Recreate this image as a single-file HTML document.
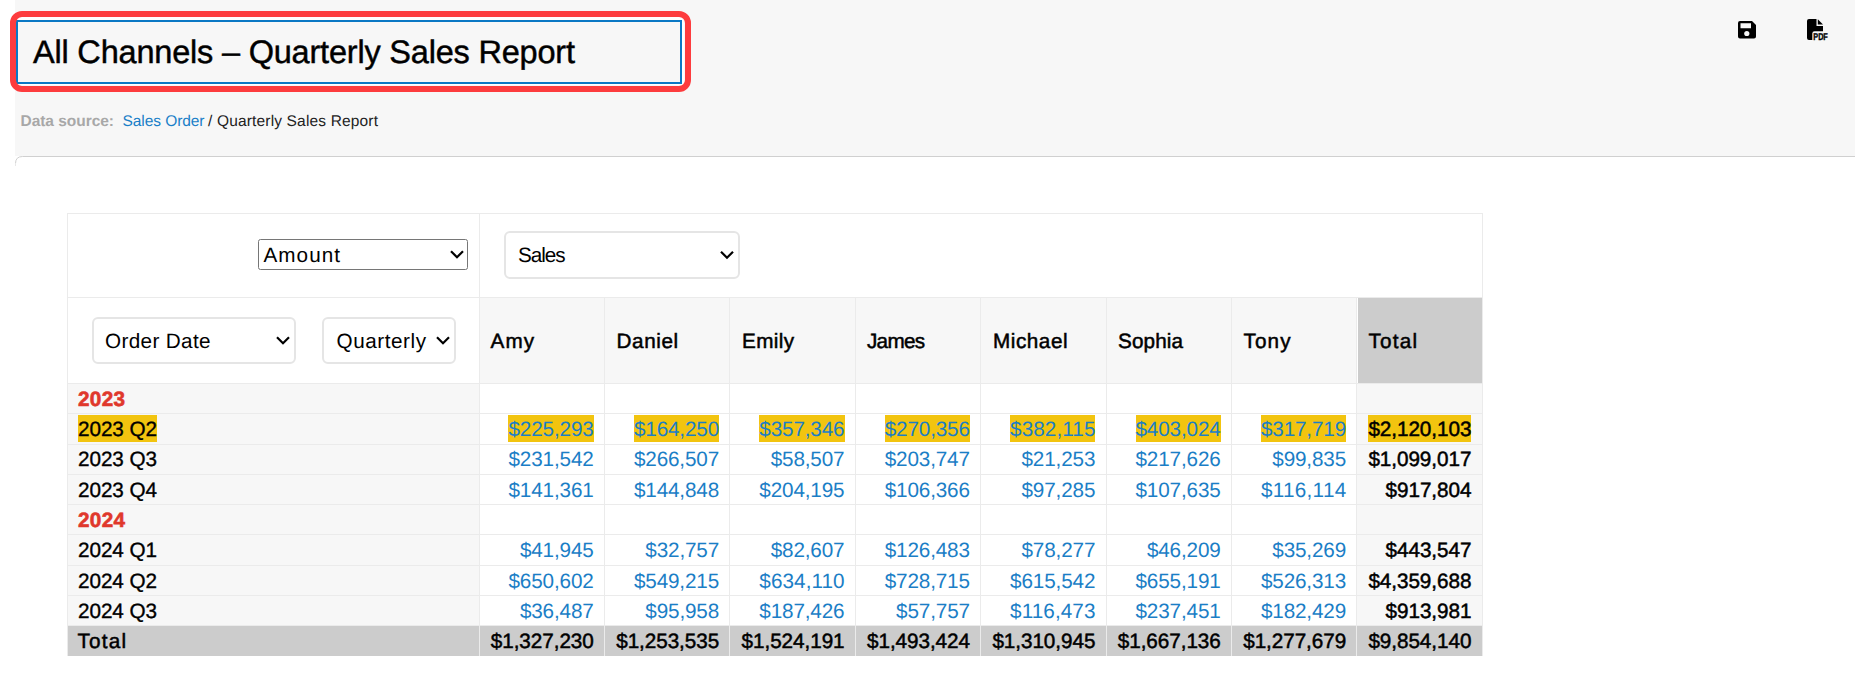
<!DOCTYPE html>
<html><head><meta charset="utf-8"><title>All Channels – Quarterly Sales Report</title>
<style>
html,body{margin:0;padding:0;width:1855px;height:674px;overflow:hidden;background:#fff;font-family:"Liberation Sans", sans-serif}
svg{display:block}
text{shape-rendering:auto}
path,circle,.g{shape-rendering:geometricPrecision}
</style></head><body>
<svg width="1855" height="674" viewBox="0 0 1855 674" font-family='"Liberation Sans", sans-serif' shape-rendering="crispEdges" text-rendering="geometricPrecision"><rect x="0" y="0" width="1855" height="674" fill="#ffffff" />
<rect x="15" y="0" width="1840" height="156" fill="#f7f7f7" />
<path d="M15 674 L15 163 Q15 156 22 156 L1855 156 L1855 674 Z" fill="#ffffff" class="g"/>
<path d="M15.5 163.5 Q15.5 156.5 22.5 156.5 L1855 156.5" fill="none" stroke="#d0d0d0" stroke-width="1" class="g"/>
<path d="M15.5 166 L15.5 163.5" fill="none" stroke="#e8e8e8" stroke-width="1" class="g"/>
<rect x="16" y="17" width="668" height="68" fill="#ffffff" />
<rect x="17" y="21" width="664" height="62" fill="#f7f7f7" />
<rect x="17" y="21" width="664" height="62" fill="none" stroke="#0a78c4" stroke-width="2"/>
<text x="33" y="63" font-size="32.5" fill="#000" textLength="542" lengthAdjust="spacing" stroke="#000" stroke-width="0.45">All Channels – Quarterly Sales Report</text>
<rect x="13" y="14" width="675" height="75" rx="9" ry="9" fill="none" stroke="#fd3c3e" stroke-width="6" class="g"/>
<text x="20.5" y="125.7" font-size="15.5" fill="#a8a8a8" font-weight="bold" textLength="93.5" lengthAdjust="spacing">Data source:</text>
<text x="122.5" y="126" font-size="15.5" fill="#1a7fc8" textLength="82" lengthAdjust="spacing">Sales Order</text>
<text x="208" y="126" font-size="15.5" fill="#222" textLength="170" lengthAdjust="spacing">/ Quarterly Sales Report</text>
<path d="M1740 21 H1752 L1756 25 V36.5 Q1756 38.5 1754 38.5 H1740 Q1738 38.5 1738 36.5 V23 Q1738 21 1740 21 Z M1740.5 23.3 V28.2 H1751 V23.3 Z" fill="#000" fill-rule="evenodd"/>
<circle cx="1746.8" cy="33.5" r="2.6" fill="#f7f7f7"/>
<path d="M1809 19 H1816.5 V26 H1823 V31.3 H1814.5 Q1812.3 31.3 1812.3 33.5 V40 H1809 Q1807 40 1807 38 V21 Q1807 19 1809 19 Z" fill="#000"/>
<path d="M1817.8 19.3 L1823 24.6 H1817.8 Z" fill="#000"/>
<text x="1813.3" y="39.8" font-size="8.6" font-weight="bold" fill="#000" stroke="#000" stroke-width="0.35" textLength="14.5" lengthAdjust="spacingAndGlyphs" transform="translate(0,-6.2) scale(1,1.16)">PDF</text>
<rect x="67" y="213" width="1415" height="443" fill="#ffffff" />
<rect x="480" y="298" width="877" height="85" fill="#f7f7f7" />
<rect x="1358" y="298" width="124" height="85" fill="#cccccc" />
<rect x="68" y="384" width="411" height="242" fill="#f7f7f7" />
<rect x="1357" y="384" width="125" height="242" fill="#f7f7f7" />
<rect x="67" y="626" width="1416" height="30" fill="#cccccc" />
<rect x="67" y="213" width="1416" height="1" fill="#ebebeb" />
<rect x="67" y="297" width="1416" height="1" fill="#ebebeb" />
<rect x="67" y="383" width="1416" height="1" fill="#ebebeb" />
<rect x="67" y="413" width="1416" height="1" fill="#ebebeb" />
<rect x="67" y="444" width="1416" height="1" fill="#ebebeb" />
<rect x="67" y="474" width="1416" height="1" fill="#ebebeb" />
<rect x="67" y="504" width="1416" height="1" fill="#ebebeb" />
<rect x="67" y="534" width="1416" height="1" fill="#ebebeb" />
<rect x="67" y="565" width="1416" height="1" fill="#ebebeb" />
<rect x="67" y="595" width="1416" height="1" fill="#ebebeb" />
<rect x="67" y="625" width="1416" height="1" fill="#ebebeb" />
<rect x="67" y="213" width="1" height="443" fill="#ebebeb" />
<rect x="1482" y="213" width="1" height="443" fill="#ebebeb" />
<rect x="479" y="213" width="1" height="443" fill="#ebebeb" />
<rect x="604" y="297" width="1" height="359" fill="#ebebeb" />
<rect x="729" y="297" width="1" height="359" fill="#ebebeb" />
<rect x="855" y="297" width="1" height="359" fill="#ebebeb" />
<rect x="980" y="297" width="1" height="359" fill="#ebebeb" />
<rect x="1106" y="297" width="1" height="359" fill="#ebebeb" />
<rect x="1231" y="297" width="1" height="359" fill="#ebebeb" />
<rect x="1356" y="297" width="1" height="359" fill="#ebebeb" />
<rect x="258.5" y="239.5" width="209" height="30" rx="2" fill="#fff" stroke="#767676" stroke-width="1" class="g"/>
<text x="263.5" y="262" font-size="20.7" fill="#000" textLength="76.5" lengthAdjust="spacing">Amount</text>
<path d="M451 251.2 L457 257.2 L463 251.2" fill="none" stroke="#000" stroke-width="2.2"/>
<rect x="505" y="232" width="234" height="46" rx="5" fill="#fff" stroke="#e5e5e5" stroke-width="2" class="g"/>
<text x="518" y="262" font-size="20.7" fill="#000" textLength="47.5" lengthAdjust="spacing">Sales</text>
<path d="M721 251.7 L727 257.7 L733 251.7" fill="none" stroke="#000" stroke-width="2.2"/>
<rect x="93" y="318" width="202" height="45" rx="5" fill="#fff" stroke="#e5e5e5" stroke-width="2" class="g"/>
<text x="105" y="348" font-size="20.7" fill="#000" textLength="105.5" lengthAdjust="spacing">Order Date</text>
<path d="M277 337.2 L283 343.2 L289 337.2" fill="none" stroke="#000" stroke-width="2.2"/>
<rect x="323" y="318" width="132" height="45" rx="5" fill="#fff" stroke="#e5e5e5" stroke-width="2" class="g"/>
<text x="336.5" y="348" font-size="20.7" fill="#000" textLength="89.5" lengthAdjust="spacing">Quarterly</text>
<path d="M437 337.2 L443 343.2 L449 337.2" fill="none" stroke="#000" stroke-width="2.2"/>
<text x="490.6" y="348" font-size="20.7" fill="#000" textLength="43.5" lengthAdjust="spacing" stroke="#000" stroke-width="0.5">Amy</text>
<text x="616.6" y="348" font-size="20.7" fill="#000" textLength="61.5" lengthAdjust="spacing" stroke="#000" stroke-width="0.5">Daniel</text>
<text x="742" y="348" font-size="20.7" fill="#000" textLength="52" lengthAdjust="spacing" stroke="#000" stroke-width="0.5">Emily</text>
<text x="867" y="348" font-size="20.7" fill="#000" textLength="58" lengthAdjust="spacing" stroke="#000" stroke-width="0.5">James</text>
<text x="993" y="348" font-size="20.7" fill="#000" textLength="74.6" lengthAdjust="spacing" stroke="#000" stroke-width="0.5">Michael</text>
<text x="1118" y="348" font-size="20.7" fill="#000" textLength="65" lengthAdjust="spacing" stroke="#000" stroke-width="0.5">Sophia</text>
<text x="1243.4" y="348" font-size="20.7" fill="#000" textLength="47.2" lengthAdjust="spacing" stroke="#000" stroke-width="0.5">Tony</text>
<text x="1368.6" y="348" font-size="20.7" fill="#000" textLength="48.4" lengthAdjust="spacing" stroke="#000" stroke-width="0.5">Total</text>
<text x="78" y="405.7" font-size="20.7" fill="#e0382c" font-weight="bold" textLength="47" lengthAdjust="spacing" stroke="#e0382c" stroke-width="0.6">2023</text>
<rect x="78" y="415" width="79" height="27" fill="#f2c40f" />
<rect x="508.4" y="415" width="85.3" height="27" fill="#f2c40f" />
<rect x="633.8" y="415" width="85.3" height="27" fill="#f2c40f" />
<rect x="759.2" y="415" width="85.3" height="27" fill="#f2c40f" />
<rect x="884.6" y="415" width="85.3" height="27" fill="#f2c40f" />
<rect x="1010.1" y="415" width="85.3" height="27" fill="#f2c40f" />
<rect x="1135.5" y="415" width="85.3" height="27" fill="#f2c40f" />
<rect x="1260.9" y="415" width="85.3" height="27" fill="#f2c40f" />
<rect x="1368.4" y="415" width="103.0" height="27" fill="#f2c40f" />
<text x="78" y="436.0" font-size="20.7" fill="#000" textLength="79" lengthAdjust="spacing" stroke="#000" stroke-width="0.35">2023 Q2</text>
<text x="593.8" y="436.0" font-size="20.7" fill="#1b7ec6" textLength="85.3" lengthAdjust="spacing" text-anchor="end">$225,293</text>
<text x="719.2" y="436.0" font-size="20.7" fill="#1b7ec6" textLength="85.3" lengthAdjust="spacing" text-anchor="end">$164,250</text>
<text x="844.6" y="436.0" font-size="20.7" fill="#1b7ec6" textLength="85.3" lengthAdjust="spacing" text-anchor="end">$357,346</text>
<text x="970.0" y="436.0" font-size="20.7" fill="#1b7ec6" textLength="85.3" lengthAdjust="spacing" text-anchor="end">$270,356</text>
<text x="1095.4" y="436.0" font-size="20.7" fill="#1b7ec6" textLength="85.3" lengthAdjust="spacing" text-anchor="end">$382,115</text>
<text x="1220.8" y="436.0" font-size="20.7" fill="#1b7ec6" textLength="85.3" lengthAdjust="spacing" text-anchor="end">$403,024</text>
<text x="1346.2" y="436.0" font-size="20.7" fill="#1b7ec6" textLength="85.3" lengthAdjust="spacing" text-anchor="end">$317,719</text>
<text x="1471.4" y="436.0" font-size="20.7" fill="#000" textLength="103.0" lengthAdjust="spacing" text-anchor="end" stroke="#000" stroke-width="0.5">$2,120,103</text>
<text x="78" y="466.3" font-size="20.7" fill="#000" textLength="79" lengthAdjust="spacing" stroke="#000" stroke-width="0.35">2023 Q3</text>
<text x="593.8" y="466.3" font-size="20.7" fill="#1b7ec6" textLength="85.3" lengthAdjust="spacing" text-anchor="end">$231,542</text>
<text x="719.2" y="466.3" font-size="20.7" fill="#1b7ec6" textLength="85.3" lengthAdjust="spacing" text-anchor="end">$266,507</text>
<text x="844.6" y="466.3" font-size="20.7" fill="#1b7ec6" textLength="73.9" lengthAdjust="spacing" text-anchor="end">$58,507</text>
<text x="970.0" y="466.3" font-size="20.7" fill="#1b7ec6" textLength="85.3" lengthAdjust="spacing" text-anchor="end">$203,747</text>
<text x="1095.4" y="466.3" font-size="20.7" fill="#1b7ec6" textLength="73.9" lengthAdjust="spacing" text-anchor="end">$21,253</text>
<text x="1220.8" y="466.3" font-size="20.7" fill="#1b7ec6" textLength="85.3" lengthAdjust="spacing" text-anchor="end">$217,626</text>
<text x="1346.2" y="466.3" font-size="20.7" fill="#1b7ec6" textLength="73.9" lengthAdjust="spacing" text-anchor="end">$99,835</text>
<text x="1471.4" y="466.3" font-size="20.7" fill="#000" textLength="103.0" lengthAdjust="spacing" text-anchor="end" stroke="#000" stroke-width="0.5">$1,099,017</text>
<text x="78" y="496.6" font-size="20.7" fill="#000" textLength="79" lengthAdjust="spacing" stroke="#000" stroke-width="0.35">2023 Q4</text>
<text x="593.8" y="496.6" font-size="20.7" fill="#1b7ec6" textLength="85.3" lengthAdjust="spacing" text-anchor="end">$141,361</text>
<text x="719.2" y="496.6" font-size="20.7" fill="#1b7ec6" textLength="85.3" lengthAdjust="spacing" text-anchor="end">$144,848</text>
<text x="844.6" y="496.6" font-size="20.7" fill="#1b7ec6" textLength="85.3" lengthAdjust="spacing" text-anchor="end">$204,195</text>
<text x="970.0" y="496.6" font-size="20.7" fill="#1b7ec6" textLength="85.3" lengthAdjust="spacing" text-anchor="end">$106,366</text>
<text x="1095.4" y="496.6" font-size="20.7" fill="#1b7ec6" textLength="73.9" lengthAdjust="spacing" text-anchor="end">$97,285</text>
<text x="1220.8" y="496.6" font-size="20.7" fill="#1b7ec6" textLength="85.3" lengthAdjust="spacing" text-anchor="end">$107,635</text>
<text x="1346.2" y="496.6" font-size="20.7" fill="#1b7ec6" textLength="85.3" lengthAdjust="spacing" text-anchor="end">$116,114</text>
<text x="1471.4" y="496.6" font-size="20.7" fill="#000" textLength="85.8" lengthAdjust="spacing" text-anchor="end" stroke="#000" stroke-width="0.5">$917,804</text>
<text x="78" y="526.9" font-size="20.7" fill="#e0382c" font-weight="bold" textLength="47" lengthAdjust="spacing" stroke="#e0382c" stroke-width="0.6">2024</text>
<text x="78" y="557.2" font-size="20.7" fill="#000" textLength="79" lengthAdjust="spacing" stroke="#000" stroke-width="0.35">2024 Q1</text>
<text x="593.8" y="557.2" font-size="20.7" fill="#1b7ec6" textLength="73.9" lengthAdjust="spacing" text-anchor="end">$41,945</text>
<text x="719.2" y="557.2" font-size="20.7" fill="#1b7ec6" textLength="73.9" lengthAdjust="spacing" text-anchor="end">$32,757</text>
<text x="844.6" y="557.2" font-size="20.7" fill="#1b7ec6" textLength="73.9" lengthAdjust="spacing" text-anchor="end">$82,607</text>
<text x="970.0" y="557.2" font-size="20.7" fill="#1b7ec6" textLength="85.3" lengthAdjust="spacing" text-anchor="end">$126,483</text>
<text x="1095.4" y="557.2" font-size="20.7" fill="#1b7ec6" textLength="73.9" lengthAdjust="spacing" text-anchor="end">$78,277</text>
<text x="1220.8" y="557.2" font-size="20.7" fill="#1b7ec6" textLength="73.9" lengthAdjust="spacing" text-anchor="end">$46,209</text>
<text x="1346.2" y="557.2" font-size="20.7" fill="#1b7ec6" textLength="73.9" lengthAdjust="spacing" text-anchor="end">$35,269</text>
<text x="1471.4" y="557.2" font-size="20.7" fill="#000" textLength="85.8" lengthAdjust="spacing" text-anchor="end" stroke="#000" stroke-width="0.5">$443,547</text>
<text x="78" y="587.5" font-size="20.7" fill="#000" textLength="79" lengthAdjust="spacing" stroke="#000" stroke-width="0.35">2024 Q2</text>
<text x="593.8" y="587.5" font-size="20.7" fill="#1b7ec6" textLength="85.3" lengthAdjust="spacing" text-anchor="end">$650,602</text>
<text x="719.2" y="587.5" font-size="20.7" fill="#1b7ec6" textLength="85.3" lengthAdjust="spacing" text-anchor="end">$549,215</text>
<text x="844.6" y="587.5" font-size="20.7" fill="#1b7ec6" textLength="85.3" lengthAdjust="spacing" text-anchor="end">$634,110</text>
<text x="970.0" y="587.5" font-size="20.7" fill="#1b7ec6" textLength="85.3" lengthAdjust="spacing" text-anchor="end">$728,715</text>
<text x="1095.4" y="587.5" font-size="20.7" fill="#1b7ec6" textLength="85.3" lengthAdjust="spacing" text-anchor="end">$615,542</text>
<text x="1220.8" y="587.5" font-size="20.7" fill="#1b7ec6" textLength="85.3" lengthAdjust="spacing" text-anchor="end">$655,191</text>
<text x="1346.2" y="587.5" font-size="20.7" fill="#1b7ec6" textLength="85.3" lengthAdjust="spacing" text-anchor="end">$526,313</text>
<text x="1471.4" y="587.5" font-size="20.7" fill="#000" textLength="103.0" lengthAdjust="spacing" text-anchor="end" stroke="#000" stroke-width="0.5">$4,359,688</text>
<text x="78" y="617.8" font-size="20.7" fill="#000" textLength="79" lengthAdjust="spacing" stroke="#000" stroke-width="0.35">2024 Q3</text>
<text x="593.8" y="617.8" font-size="20.7" fill="#1b7ec6" textLength="73.9" lengthAdjust="spacing" text-anchor="end">$36,487</text>
<text x="719.2" y="617.8" font-size="20.7" fill="#1b7ec6" textLength="73.9" lengthAdjust="spacing" text-anchor="end">$95,958</text>
<text x="844.6" y="617.8" font-size="20.7" fill="#1b7ec6" textLength="85.3" lengthAdjust="spacing" text-anchor="end">$187,426</text>
<text x="970.0" y="617.8" font-size="20.7" fill="#1b7ec6" textLength="73.9" lengthAdjust="spacing" text-anchor="end">$57,757</text>
<text x="1095.4" y="617.8" font-size="20.7" fill="#1b7ec6" textLength="85.3" lengthAdjust="spacing" text-anchor="end">$116,473</text>
<text x="1220.8" y="617.8" font-size="20.7" fill="#1b7ec6" textLength="85.3" lengthAdjust="spacing" text-anchor="end">$237,451</text>
<text x="1346.2" y="617.8" font-size="20.7" fill="#1b7ec6" textLength="85.3" lengthAdjust="spacing" text-anchor="end">$182,429</text>
<text x="1471.4" y="617.8" font-size="20.7" fill="#000" textLength="85.8" lengthAdjust="spacing" text-anchor="end" stroke="#000" stroke-width="0.5">$913,981</text>
<text x="77.5" y="648.1" font-size="20.7" fill="#000" textLength="48.5" lengthAdjust="spacing" stroke="#000" stroke-width="0.5">Total</text>
<text x="593.8" y="648.1" font-size="20.7" fill="#000" textLength="103.0" lengthAdjust="spacing" text-anchor="end" stroke="#000" stroke-width="0.5">$1,327,230</text>
<text x="719.2" y="648.1" font-size="20.7" fill="#000" textLength="103.0" lengthAdjust="spacing" text-anchor="end" stroke="#000" stroke-width="0.5">$1,253,535</text>
<text x="844.6" y="648.1" font-size="20.7" fill="#000" textLength="103.0" lengthAdjust="spacing" text-anchor="end" stroke="#000" stroke-width="0.5">$1,524,191</text>
<text x="970.0" y="648.1" font-size="20.7" fill="#000" textLength="103.0" lengthAdjust="spacing" text-anchor="end" stroke="#000" stroke-width="0.5">$1,493,424</text>
<text x="1095.4" y="648.1" font-size="20.7" fill="#000" textLength="103.0" lengthAdjust="spacing" text-anchor="end" stroke="#000" stroke-width="0.5">$1,310,945</text>
<text x="1220.8" y="648.1" font-size="20.7" fill="#000" textLength="103.0" lengthAdjust="spacing" text-anchor="end" stroke="#000" stroke-width="0.5">$1,667,136</text>
<text x="1346.2" y="648.1" font-size="20.7" fill="#000" textLength="103.0" lengthAdjust="spacing" text-anchor="end" stroke="#000" stroke-width="0.5">$1,277,679</text>
<text x="1471.4" y="648.1" font-size="20.7" fill="#000" textLength="103.0" lengthAdjust="spacing" text-anchor="end" stroke="#000" stroke-width="0.5">$9,854,140</text></svg>
</body></html>
